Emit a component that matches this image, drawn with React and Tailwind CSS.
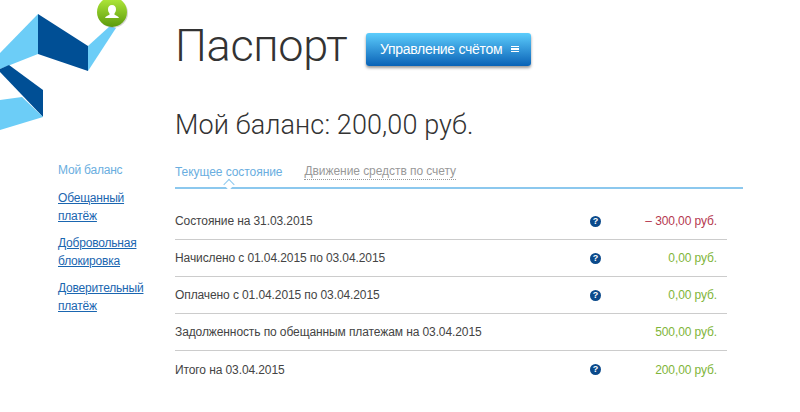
const rows = [
  { label: "Состояние на 31.03.2015", help: true, value: "– 300,00 руб.", tone: "text-[#b5384f]" },
  { label: "Начислено с 01.04.2015 по 03.04.2015", help: true, value: "0,00 руб.", tone: "text-[#7fb53a]" },
  { label: "Оплачено с 01.04.2015 по 03.04.2015", help: true, value: "0,00 руб.", tone: "text-[#7fb53a]" },
  { label: "Задолженность по обещанным платежам на 03.04.2015", help: false, value: "500,00 руб.", tone: "text-[#7fb53a]" },
  { label: "Итого на 03.04.2015", help: true, value: "200,00 руб.", tone: "text-[#7fb53a]" },
];

function Logo() {
  return (
    <svg width="160" height="134" viewBox="0 0 160 134" className="block shrink-0">
      <defs>
        <linearGradient id="g" x1="0" y1="0" x2="0" y2="1">
          <stop offset="0" stopColor="#b4ec3c" />
          <stop offset="1" stopColor="#5b9a0c" />
        </linearGradient>
      </defs>
      <polygon points="0,53 38,14 38,54 0,69" fill="#6ccdf7" />
      <polygon points="38,14 88,46 88,71 38,54" fill="#004f95" />
      <polygon points="88,46 110,26 116,28 88,71" fill="#6ccdf7" />
      <polygon points="0,69 9,65 43,90 43,117 0,72" fill="#004f95" />
      <polygon points="0,100 22,97 43,117 0,130" fill="#6ccdf7" />
      <circle cx="113" cy="13" r="15" fill="#8a8a8a" opacity="0.35" />
      <circle cx="112" cy="12" r="15" fill="url(#g)" />
      <path d="M112 5c-2.600 0-4 2-4 4.200 0 1.800.7 3.200 1.500 4.200v1.300c-1.200.8-4 1.300-4.500 3.300h14c-.5-2-3.300-2.500-4.500-3.300v-1.300c.8-1 1.500-2.400 1.500-4.200C116 7 114.600 5 112 5z" fill="#fff" />
    </svg>
  );
}

function Help() {
  return (
    <span className="flex h-[11px] w-[11px] items-center justify-center rounded-full bg-[#0b4a8b] text-[9px] font-bold leading-none text-white">
      ?
    </span>
  );
}

export default function App() {
  return (
    <div className="flex h-[412px] w-[800px] overflow-hidden bg-white font-['Liberation_Sans',sans-serif] text-[12px] tracking-[-0.1px] text-[#444]">
      <aside className="w-[175px] shrink-0">
        <Logo />
        <nav className="mt-[27px] flex flex-col pl-[58px] text-[12px] leading-[18px] tracking-[-0.2px]">
          <span className="text-[#6aaee0]">Мой баланс</span>
          <a className="mt-[10px] w-[80px] text-[#1a66b0] underline">Обещанный платёж</a>
          <a className="mt-[9px] w-[90px] text-[#1a66b0] underline">Добровольная блокировка</a>
          <a className="mt-[9px] w-[90px] text-[#1a66b0] underline">Доверительный платёж</a>
        </nav>
      </aside>
      <main className="w-[568px] shrink-0">
        <header className="mt-[15px] flex items-center">
          <h1 className="w-[191px] font-['Roboto',sans-serif] text-[45px] leading-[62px] font-[350] tracking-[-0.3px] text-[#333]">Паспорт</h1>
          <button className="mt-[6px] flex h-[33px] w-[165px] items-center rounded-[3px] bg-gradient-to-b from-[#5ccdfc] to-[#0762b6] pl-[14px] text-[14px] tracking-[-0.3px] text-white shadow-[0_2px_3px_rgba(0,0,0,0.4)]">
            Управление счётом
            <span className="ml-[9px] flex w-[8px] flex-col gap-[1px]">
              <i className="block h-[1.5px] bg-white" />
              <i className="block h-[1.5px] bg-white" />
              <i className="block h-[1.5px] bg-white" />
            </span>
          </button>
        </header>
        <h2 className="mt-[29px] font-['Roboto',sans-serif] text-[27px] leading-[38px] font-[350] tracking-[0.1px] text-[#333]">Мой баланс: 200,00 руб.</h2>
        <div className="relative mt-[14px] flex h-[31px] gap-[22px] border-b-2 border-[#8cc8ee] pt-[4px] text-[12px] leading-[20px] tracking-[-0.06px]">
          <span className="text-[#6aaee0]">Текущее состояние</span>
          <span className="h-[18px] border-b border-dotted border-[#999] leading-[19px] text-[#999]">Движение средств по счету</span>
          <span className="absolute bottom-[-2px] left-[50px] h-[8px] w-[8px] translate-y-[-0.5px] rotate-45 border-t-[1.5px] border-l-[1.5px] border-[#8cc8ee] bg-white" />
        </div>
        <div className="mt-[14px] w-[552px]">
          {rows.map((r, i) => (
            <div key={r.label} className={`flex h-[37px] items-center pr-[10px] ${i < rows.length - 1 ? "border-b border-[#ccc]" : ""}`}>
              <span className="flex-1">{r.label}</span>
              {r.help && <span className="absolute left-[590px]"><Help /></span>}
              <span className={r.tone}>{r.value}</span>
            </div>
          ))}
        </div>
      </main>
    </div>
  );
}
